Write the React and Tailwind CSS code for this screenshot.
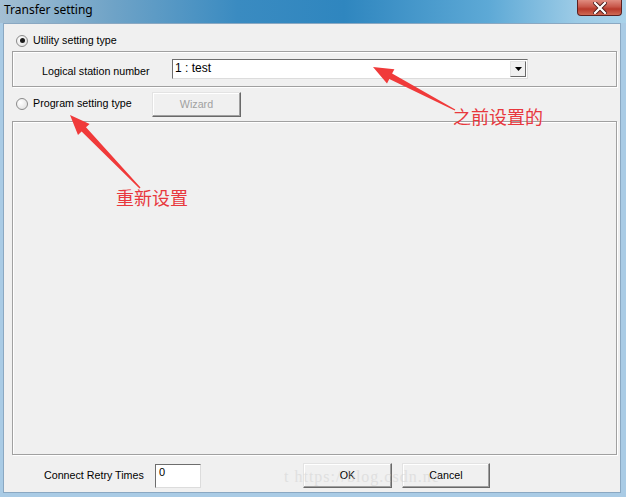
import React from "react";

function Radio({ checked }) {
  return (
    <div className="w-[12px] h-[12px] rounded-full border border-[#8a8a8a] bg-[radial-gradient(circle_at_35%_35%,#ffffff,#dcdcdc)] flex items-center justify-center shrink-0">
      {checked && <div className="w-[5px] h-[5px] rounded-full bg-[#1a1a1a]" />}
    </div>
  );
}

function Button({ children, className = "", disabled }) {
  return (
    <div
      className={
        "h-[25px] flex items-center justify-center bg-[#f0f0f0] border border-t-[#e3e3e3] border-l-[#e3e3e3] border-r-[#696969] border-b-[#696969] shadow-[inset_-1px_-1px_#a0a0a0,inset_1px_1px_#ffffff] text-[10.7px] " +
        (disabled ? "text-[#a0a0a0] " : "text-black ") +
        className
      }
    >
      {children}
    </div>
  );
}

export default function App() {
  return (
    <div
      className="relative w-[626px] h-[497px] flex flex-col bg-[#a9cbe5] overflow-hidden"
      style={{ fontFamily: '"Liberation Sans", Arial, sans-serif' }}
    >
      {/* Title bar */}
      <div className="h-[23px] flex items-start shrink-0 bg-[linear-gradient(90deg,#a4bfd3_0%,#6fa3c7_18%,#3a8bc1_38%,#2f86bf_55%,#5da9d6_78%,#9ccbe6_92%,#a9d2ea_100%)]">
        <span
          className="ml-[4px] mt-[2px] text-[12px] leading-[16px] text-black"
          style={{ fontFamily: '"Noto Sans", "Open Sans", sans-serif' }}
        >
          Transfer setting
        </span>
        <div className="ml-auto mr-[4px] w-[45px] h-[16px] rounded-b-[4px] border border-t-0 border-[#5b2020] bg-[linear-gradient(180deg,#e08c80_0%,#c8574a_45%,#b8392b_60%,#cf6a55_100%)] flex items-center justify-center">
          <svg width="14" height="12" viewBox="0 0 14 12">
            <path d="M2 1 L12 11 M12 1 L2 11" stroke="#4a1a1a" strokeWidth="4" strokeLinecap="square" />
            <path d="M2 1 L12 11 M12 1 L2 11" stroke="#ffffff" strokeWidth="2.2" strokeLinecap="square" />
          </svg>
        </div>
      </div>

      {/* Client area */}
      <div className="flex-1 ml-[3px] mr-[5px] mb-[4px] bg-[#f0f0f0] border border-[#8aa8c2] flex flex-col">
        {/* Utility row */}
        <div className="mt-[10px] h-[13px] pl-[12px] flex items-center">
          <Radio checked />
          <span className="ml-[5px] text-[10.7px] text-black">Utility setting type</span>
        </div>

        {/* Group box 1 */}
        <div className="mt-[4px] ml-[8px] mr-[3px] h-[36px] border border-[#a0a0a0] shadow-[inset_1px_1px_#ffffff,1px_1px_#ffffff] flex items-start pl-[29px] pt-[7px]">
          <span className="w-[130px] mt-[6px] text-[10.7px] leading-[13px] text-black">Logical station number</span>
          <div className="w-[356px] h-[20px] bg-white border border-t-[#6d6d6d] border-l-[#6d6d6d] border-r-[#dcdcdc] border-b-[#dcdcdc] flex items-center">
            <span className="ml-[2px] text-[12px] text-black leading-[14px] -mt-[3px]">1 : test</span>
            <div className="ml-auto mr-[1px] w-[16px] h-[16px] bg-[#f0f0f0] border border-t-[#e3e3e3] border-l-[#e3e3e3] border-r-[#696969] border-b-[#696969] flex items-center justify-center">
              <svg width="7" height="4" viewBox="0 0 7 4">
                <path d="M0 0 L7 0 L3.5 4 Z" fill="#000" />
              </svg>
            </div>
          </div>
        </div>

        {/* Program row */}
        <div className="mt-[5px] h-[25px] pl-[12px] flex items-start">
          <div className="mt-[6px]">
            <Radio />
          </div>
          <span className="ml-[5px] mt-[5px] w-[119px] text-[10.7px] leading-[13px] text-black">Program setting type</span>
          <Button disabled className="w-[89px]">Wizard</Button>
        </div>

        {/* Group box 2 */}
        <div className="mt-[4px] ml-[8px] mr-[3px] h-[334px] border border-[#a0a0a0] shadow-[inset_1px_1px_#ffffff,1px_1px_#ffffff]" />

        {/* Bottom row */}
        <div className="mt-[8px] h-[25px] pl-[40px] flex items-center">
          <span className="w-[111px] text-[10.7px] text-black">Connect Retry Times</span>
          <div className="w-[46px] h-[24px] bg-white border border-t-[#6d6d6d] border-l-[#6d6d6d] border-r-[#dcdcdc] border-b-[#dcdcdc] flex items-start">
            <span className="ml-[3px] mt-[1px] text-[11px] leading-[13px] text-black">0</span>
          </div>
          <Button className="ml-[102px] w-[89px]">OK</Button>
          <Button className="ml-[10px] w-[88px]">Cancel</Button>
        </div>
      </div>

      {/* Watermark */}
      <span
        className="absolute left-[284px] top-[465px] text-[16px] text-[#d0d0d0] opacity-50 pointer-events-none tracking-[1px]"
        style={{ fontFamily: '"Liberation Serif", serif' }}
      >
        t https://blog.csdn.ne
      </span>

      {/* Annotation arrows */}
      <svg className="absolute left-0 top-0 pointer-events-none" width="626" height="497" viewBox="0 0 626 497">
        <polygon
          points="373,67 394.4,69.2 392.1,73.6 455.3,109.4 454.7,110.6 389.3,79 387,83.4"
          fill="#f03a3a"
        />
        <polygon
          points="70,115 89.6,123.9 86,127.3 140.5,187.5 139.5,188.5 81.6,131.5 78,134.9"
          fill="#f03a3a"
        />
      </svg>
      <span
        className="absolute left-[453px] top-[105px] text-[18px] leading-[22px] text-[#e8383d]"
        style={{ fontFamily: '"Noto Sans CJK SC", sans-serif' }}
      >
        之前设置的
      </span>
      <span
        className="absolute left-[116px] top-[186px] text-[18px] leading-[22px] text-[#e8383d]"
        style={{ fontFamily: '"Noto Sans CJK SC", sans-serif' }}
      >
        重新设置
      </span>
    </div>
  );
}
